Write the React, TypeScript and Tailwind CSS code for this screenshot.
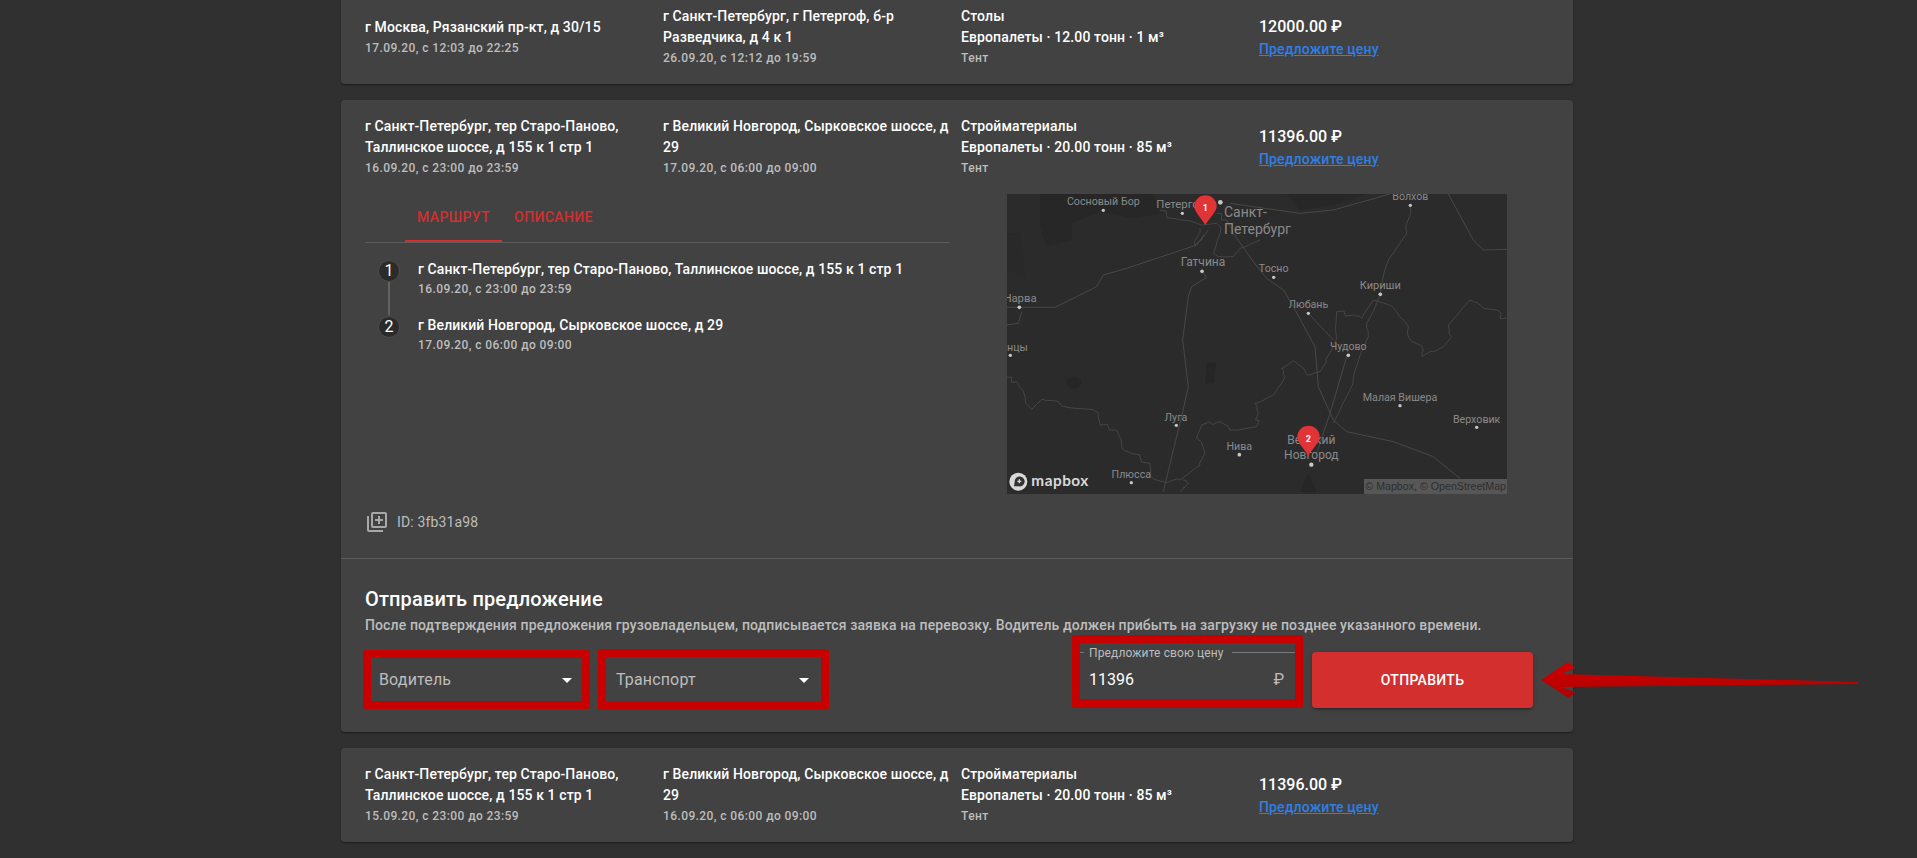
const labels: [string, number, number, number][] = [
  ["Сосновый Бор", 310, 46, 32],
  ["Петергоф", 545, 53, 34],
  ["Волхов", 1231, 30, 32],
  ["Гатчина", 609, 228, 36],
  ["Тосно", 821, 246, 32],
  ["Кириши", 1141, 297, 33],
  ["Любань", 925, 355, 32],
  ["Нарва", 60, 336, 34],
  ["Сланцы", 24, 483, 32],
  ["Чудово", 1045, 481, 32],
  ["Малая Вишера", 1200, 632, 32],
  ["Верховик", 1430, 698, 32],
  ["Луга", 528, 692, 32],
  ["Нива", 718, 779, 32],
  ["Плюсса", 394, 863, 32],
];

const dots: [number, number, number][] = [
  [310, 61, 5], [547, 70, 5], [661, 37, 7], [1231, 46, 5], [606, 244, 5.5], [821, 262, 5],
  [1141, 313, 5.5], [925, 370, 5], [58, 352, 5.5], [31, 496, 5], [1045, 496, 5.5], [1200, 647, 5],
  [1430, 712, 5], [529, 706, 5], [718, 794, 5.5], [394, 878, 5], [934, 824, 6.5],
];

const roads = [
  "M20 352 L165 352 L230 320 L290 290 L310 255 L380 235 L470 205 L590 165 L612 135",
  "M606 244 L620 262 L575 290 L565 320 L548 450 L565 590 L540 700 L520 780 L490 905",
  "M700 130 L760 215 L800 265 L850 300 L880 350 L945 470 L955 590 L1000 690 L1040 725 L1180 755 L1300 800 L1410 890",
  "M925 370 L1000 450",
  "M1040 500 L990 670 L950 790",
  "M690 40 L830 60 L900 70 L1000 60 L1170 12",
  "M1345 12 L1420 150 L1450 180 L1521 178",
  "M21 405 L55 400 L65 365",
];

const borders = [
  "M21 562 L50 575 L75 620 L95 658 L125 628 L175 635 L225 655 L295 668 L300 705 L350 720 L365 770 L395 790 L450 820 L450 855 L500 878 L540 870 L600 825 L615 790 L590 745 L605 705 L660 695 L690 720 L770 710 L775 670 L765 640 L820 615 L855 560 L845 535 L880 512 L920 555 L960 545 L995 480 L1010 440 L1010 365 L1060 375 L1085 385 L1120 330 L1190 365 L1225 410 L1235 455 L1270 480 L1265 500 L1330 470 L1355 440 L1345 405 L1410 330 L1440 345 L1490 360 L1500 385 L1521 385",
  "M1231 46 L1220 130 L1165 210 L1140 313 L1100 400 L1105 440 L1060 560 L1050 600 L1000 700",
  "M480 60 L520 85 L590 100 L650 100 L660 130 L640 190 L700 200 L720 175 L780 150",
  "M600 115 L585 165 L605 150 L625 120",
  "M650 70 L680 90 L700 135",
  "M540 905 L565 880 L550 870",
];

function wobble(d: string) {
  const pts = d.replace("M", "").split(" L").map((p) => p.trim().split(" ").map(Number));
  let out = `M${pts[0][0]} ${pts[0][1]}`;
  for (let i = 1; i < pts.length; i++) {
    const [ax, ay] = pts[i - 1];
    const [bx, by] = pts[i];
    for (let k = 1; k <= 3; k++) {
      const t = k / 3;
      const off = k === 3 ? 0 : (((i * 7 + k * 13) % 11) - 5) * 1.3;
      out += ` L${(ax + (bx - ax) * t + off).toFixed(1)} ${(ay + (by - ay) * t - off).toFixed(1)}`;
    }
  }
  return out;
}

function MapView() {
  return (
    <svg viewBox="21 12 1500 900" className="block w-[500px] h-[300px] shrink-0 bg-[#2b2b2b]">
      <path d="M120 12 L460 12 L480 70 L400 85 L300 65 L215 100 L215 150 L140 170 L120 110Z" fill="#272727" />
      <path d="M860 12 L1100 12 L1000 45 L900 60Z" fill="#272727" />
      <path d="M21 130 L60 130 L75 260 L21 240Z" fill="#292929" />
      <path d="M620 520 L650 515 L640 580 L615 580Z" fill="#262626" />
      <ellipse cx="222" cy="578" rx="22" ry="17" fill="#262626" />
      <path d="M900 905 L925 850 L950 905Z" fill="#262626" />
      {roads.map((d) => (
        <path key={d} d={d} fill="none" stroke="#525252" strokeWidth="2.2" />
      ))}
      {borders.map((d) => (
        <path key={d} d={wobble(d)} fill="none" stroke="#4e4e4e" strokeWidth="2.2" />
      ))}
      {dots.map(([x, y, r]) => (
        <circle key={`${x}-${y}`} cx={x} cy={y} r={r} fill="#c8c8c8" />
      ))}
      <g fontFamily="Roboto, sans-serif" fill="#8a8a8a">
        {labels.map(([t, x, y, s]) => (
          <text key={t} x={x} y={y} fontSize={s} textAnchor="middle">{t}</text>
        ))}
        <text x="672" y="82" fontSize="42">Санкт-</text>
        <text x="672" y="132" fontSize="42">Петербург</text>
        <text x="934" y="762" fontSize="36" textAnchor="middle">Великий</text>
        <text x="934" y="806" fontSize="36" textAnchor="middle">Новгород</text>
      </g>
      <path d="M616 105 C600 80 583 65 583 49 A33.500 33.500 0 0 1 650 49 C650 65 632 80 616 105Z" fill="#e03436" />
      <path d="M925 797 C909 772 892 757 892 741 A33.500 33.500 0 0 1 959 741 C959 757 941 772 925 797Z" fill="#e03436" />
      <g fontFamily="Roboto, sans-serif" fontWeight="700" fontSize="27" fill="#fff" textAnchor="middle">
        <text x="616" y="63">1</text>
        <text x="925" y="755">2</text>
      </g>
      <circle cx="55" cy="875" r="27" fill="#d9d9d9" />
      <path d="M42 889 L44 875 A15 15 0 1 1 56 889Z" fill="#333" />
      <path d="M58 868 V880 M52 874 H64" stroke="#d9d9d9" strokeWidth="4" />
      <text x="94" y="888" fontFamily="Lato, sans-serif" fontWeight="700" fontSize="46" letterSpacing="1.500" fill="#d9d9d9">mapbox</text>
      <rect x="1092" y="867" width="429" height="45" fill="#575757" />
      <text x="1096" y="901" fontFamily="'Liberation Sans', sans-serif" fontSize="32" fill="#2e2e2e">© Mapbox, © OpenStreetMap</text>
    </svg>
  );
}

function Place({ lines, date, tight }: { lines: string; date: string; tight?: boolean }) {
  return (
    <div>
      <div className="text-sm leading-[21px] font-medium tracking-[0.11px] text-white">{lines}</div>
      <div className={`text-xs font-medium tracking-[0.4px] text-[#bdbdbd] ${tight ? "leading-[18px]" : "leading-[20px]"}`}>{date}</div>
    </div>
  );
}

function Summary({ from, fromDate, to, toDate, cargo, spec, price }: {
  from: string; fromDate: string; to: string; toDate: string; cargo: string; spec: string; price: string;
}) {
  return (
    <div className="grid grid-cols-[286px_286px_286px_1fr] gap-x-3 items-center px-6 py-4">
      <Place lines={from} date={fromDate} />
      <Place lines={to} date={toDate} />
      <div>
        <div className="text-sm leading-[21px] font-medium tracking-[0.11px] text-white">{cargo}</div>
        <div className="text-sm leading-[21px] font-medium tracking-[0.11px] text-white">{spec}</div>
        <div className="text-xs leading-[20px] font-medium tracking-[0.4px] text-[#bdbdbd]">Тент</div>
      </div>
      <div>
        <div className="text-base leading-6 font-medium text-white">{price} ₽</div>
        <div className="text-sm leading-[21px] font-medium tracking-[0.15px] text-[#2e7fe6] underline">Предложите цену</div>
      </div>
    </div>
  );
}

function Step({ n, title, date, last }: { n: number; title: string; date: string; last?: boolean }) {
  return (
    <div className={`flex gap-[18px] pl-[13px] ${last ? "h-[41px]" : "h-[56px]"}`}>
      <div className="flex flex-col items-center w-[22px] pt-px shrink-0">
        <div className="w-[22px] h-[22px] rounded-full bg-[#2b2b2b] border border-[#4d4d4d] flex items-center justify-center text-base leading-none text-white shrink-0">{n}</div>
        {!last && <div className="w-[2px] flex-1 bg-[#636363]" />}
      </div>
      <Place lines={title} date={date} tight />
    </div>
  );
}

const cardClass = "ml-[341px] w-[1232px] bg-[#424242] rounded-[4px] shadow-[0_2px_1px_-1px_rgba(0,0,0,0.2),0_1px_1px_0_rgba(0,0,0,0.14),0_1px_3px_0_rgba(0,0,0,0.12)]";

function SelectField({ label, children }: { label: string; children: React.ReactNode }) {
  return (
    <div className="relative w-[224px] h-14 flex items-center justify-between pl-[13px] pr-[9px] border border-[#6e6e6e] rounded-[4px] text-base tracking-[0.15px] text-[#bdbdbd]">
      <span>{label}</span>
      <svg viewBox="0 0 24 24" className="w-6 h-6 fill-white"><path d="M7 10l5 5 5-5z" /></svg>
      {children}
    </div>
  );
}

export default function App() {
  return (
    <div className="relative h-[858px] overflow-hidden bg-[#303030] font-['Roboto',sans-serif]">
      <div className="flex flex-col gap-4 -mt-[10px]">
        <div className={cardClass}>
          <Summary from="г Москва, Рязанский пр-кт, д 30/15" fromDate="17.09.20, с 12:03 до 22:25"
            to="г Санкт-Петербург, г Петергоф, б-р Разведчика, д 4 к 1" toDate="26.09.20, с 12:12 до 19:59"
            cargo="Столы" spec="Европалеты · 12.00 тонн · 1 м³" price="12000.00" />
        </div>

        <div className={cardClass}>
          <Summary from="г Санкт-Петербург, тер Старо-Паново, Таллинское шоссе, д 155 к 1 стр 1" fromDate="16.09.20, с 23:00 до 23:59"
            to="г Великий Новгород, Сырковское шоссе, д 29" toDate="17.09.20, с 06:00 до 09:00"
            cargo="Стройматериалы" spec="Европалеты · 20.00 тонн · 85 м³" price="11396.00" />
          <div className="flex px-6">
            <div className="w-[584px] shrink-0">
              <div className="flex pl-10 border-b border-[#5c5c5c] text-sm font-medium uppercase tracking-[0.4px] text-[#d32f2f]">
                <div className="h-12 px-3 flex items-center border-b-2 border-[#d32f2f]">Маршрут</div>
                <div className="h-12 px-3 flex items-center border-b-2 border-transparent">Описание</div>
              </div>
              <div className="mt-4">
                <Step n={1} title="г Санкт-Петербург, тер Старо-Паново, Таллинское шоссе, д 155 к 1 стр 1" date="16.09.20, с 23:00 до 23:59" />
                <Step n={2} title="г Великий Новгород, Сырковское шоссе, д 29" date="17.09.20, с 06:00 до 09:00" last />
              </div>
            </div>
            <div className="ml-[58px]"><MapView /></div>
          </div>
          <div className="flex items-center gap-2 px-6 mt-4 mb-6 h-6 text-sm leading-[22px] tracking-[0.15px] text-[#bdbdbd]">
            <svg viewBox="0 0 24 24" className="w-6 h-6 fill-[#a8a8a8]">
              <path d="M4 6H2v14c0 1.100.9 2 2 2h14v-2H4V6zm16-4H8c-1.100 0-2 .9-2 2v12c0 1.100.9 2 2 2h12c1.100 0 2-.9 2-2V4c0-1.100-.9-2-2-2zm0 14H8V4h12v12zm-7-2h2v-3h3V9h-3V6h-2v3h-3v2h3z" />
            </svg>
            <span className="-mt-px">ID: 3fb31a98</span>
          </div>
          <div className="border-t border-[#5c5c5c] px-6 pt-6 pb-6">
            <div className="text-xl leading-8 font-medium tracking-[0.15px] text-white">Отправить предложение</div>
            <div className="text-sm leading-[21px] font-medium tracking-[0.12px] text-[#bdbdbd]">После подтверждения предложения грузовладельцем, подписывается заявка на перевозку. Водитель должен прибыть на загрузку не позднее указанного времени.</div>
            <div className="flex items-center mt-4">
              <div className="flex gap-[13px]">
                <SelectField label="Водитель">
                  <div className="absolute -left-[3px] -right-[2px] -top-[3px] -bottom-[2px] border-8 border-[#c80000] rounded-[3px]" />
                </SelectField>
                <SelectField label="Транспорт">
                  <div className="absolute -left-[5px] -right-[4px] -top-[4px] -bottom-[3px] border-8 border-[#c80000] rounded-[3px]" />
                </SelectField>
              </div>
              <div className="ml-auto mr-4 flex gap-3">
                <div className="relative w-[225px] h-14 flex items-center justify-between pl-[13px] pr-[15px] border border-[#7a7a7a] rounded-[4px] text-base text-white">
                  <span>11396</span>
                  <span className="text-[#bdbdbd]">₽</span>
                  <span className="absolute left-[8px] -top-2 pl-[5px] pr-[8px] bg-[#424242] text-xs leading-4 tracking-[0.12px] text-[#bdbdbd]">Предложите свою цену</span>
                  <div className="absolute -left-[4px] -right-[4px] -top-[18px] -bottom-[1px] border-8 border-t-8 border-b-[9px] border-[#c80000] rounded-[3px]" />
                </div>
                <div className="w-[221px] h-14 flex items-center justify-center rounded-[4px] bg-[#d32f2f] text-sm font-medium uppercase tracking-[0.3px] text-white shadow-[0_3px_1px_-2px_rgba(0,0,0,0.2),0_2px_2px_0_rgba(0,0,0,0.14),0_1px_5px_0_rgba(0,0,0,0.12)]">Отправить</div>
              </div>
            </div>
          </div>
        </div>

        <div className={cardClass}>
          <Summary from="г Санкт-Петербург, тер Старо-Паново, Таллинское шоссе, д 155 к 1 стр 1" fromDate="15.09.20, с 23:00 до 23:59"
            to="г Великий Новгород, Сырковское шоссе, д 29" toDate="16.09.20, с 06:00 до 09:00"
            cargo="Стройматериалы" spec="Европалеты · 20.00 тонн · 85 м³" price="11396.00" />
        </div>
      </div>

      <svg viewBox="1535 655 330 50" className="absolute left-[1535px] top-[655px] w-[330px] h-[50px]">
        <defs>
          <linearGradient id="arrowFill" x1="0" y1="0" x2="0" y2="1">
            <stop offset="0" stopColor="#d00000" />
            <stop offset="1" stopColor="#b00000" />
          </linearGradient>
        </defs>
        <polygon points="1541,680 1568,662 1575,668 1561,674 1858,682 1858,684 1561,687 1575,692 1569,698" fill="url(#arrowFill)" />
      </svg>
    </div>
  );
}
